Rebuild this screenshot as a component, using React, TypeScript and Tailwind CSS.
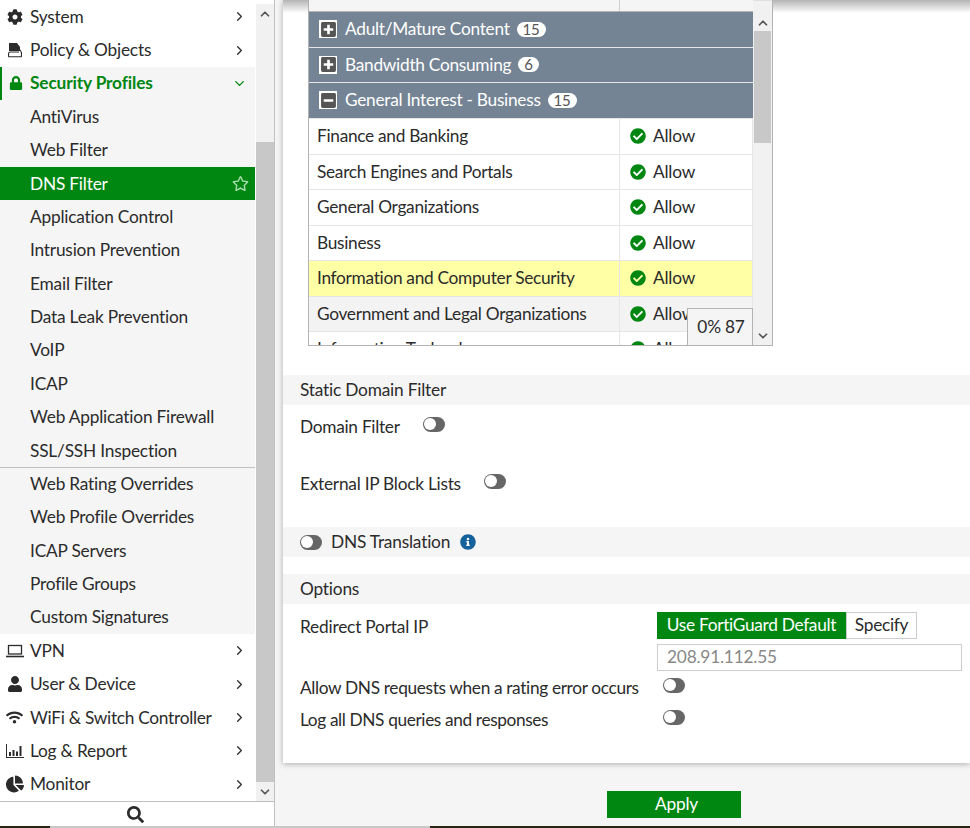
import {
  FaCog,
  FaLock,
  FaRegStar,
  FaUser,
  FaWifi,
  FaChartPie,
  FaSearch,
  FaPlusSquare,
  FaMinusSquare,
  FaCheckCircle,
  FaInfoCircle,
} from "react-icons/fa";
import { ChevronRight, ChevronDown, ChevronUp } from "lucide-react";
import type { ReactNode } from "react";

const PolicyIcon = () => (
  <svg viewBox="0 0 16 16" className="h-4 w-4" fill="#2b2b2b">
    <path d="M2 1h8l3 4v4H2z" />
    <path d="M13 7l2 3.5v4a.8.8 0 0 1-.8.8H1.8a.8.8 0 0 1-.8-.8V12c0-1.2.8-2.5 2.2-2.5H12v1H3.4c-.8 0-1.3.7-1.3 1.500v2.2h11.800v-3.400L13 9z" />
  </svg>
);

const LaptopIcon = () => (
  <svg viewBox="0 0 18 14" className="h-[14px] w-[18px]" fill="none" stroke="#2b2b2b">
    <rect x="2.500" y="1.500" width="13" height="8.500" strokeWidth="1.300" />
    <path d="M0 12.500h18" strokeWidth="1.600" />
  </svg>
);

const ChartIcon = () => (
  <svg viewBox="0 0 18 14" className="h-[14px] w-[18px]" fill="#2b2b2b">
    <path d="M0 0h1v13h17v1H0z" />
    <path d="M3 8h2v4H3zM6.500 6h2v6h-2zM10 7.500h2V12h-2zM13.500 2h2v10h-2z" />
  </svg>
);

const Toggle = () => (
  <span className="flex h-[15px] w-[22px] items-center rounded-full bg-[#666] pl-[1px]">
    <span className="h-[12px] w-[12px] rounded-full bg-white" />
  </span>
);

type MenuItem = { label: string; icon: ReactNode; tracking?: string };

const topItems: MenuItem[] = [
  { label: "System", icon: <FaCog size={16} color="#2b2b2b" /> },
  { label: "Policy & Objects", icon: <PolicyIcon /> },
];

const subItems = [
  "AntiVirus",
  "Web Filter",
  "DNS Filter",
  "Application Control",
  "Intrusion Prevention",
  "Email Filter",
  "Data Leak Prevention",
  "VoIP",
  "ICAP",
  "Web Application Firewall",
  "SSL/SSH Inspection",
];

const subItems2 = [
  "Web Rating Overrides",
  "Web Profile Overrides",
  "ICAP Servers",
  "Profile Groups",
  "Custom Signatures",
];

const bottomItems: MenuItem[] = [
  { label: "VPN", icon: <LaptopIcon /> },
  { label: "User & Device", icon: <FaUser size={16} color="#2b2b2b" /> },
  {
    label: "WiFi & Switch Controller",
    icon: <FaWifi size={17} color="#2b2b2b" />,
    tracking: "tracking-[-0.280px]",
  },
  { label: "Log & Report", icon: <ChartIcon /> },
  { label: "Monitor", icon: <FaChartPie size={18} color="#2b2b2b" /> },
];

const TopRow = ({ item }: { item: MenuItem }) => (
  <div className="flex h-[33.380px] items-center pr-[8px]">
    <span className="flex w-[30px] shrink-0 justify-center pr-[1px]">{item.icon}</span>
    <span className={`flex-1 ${item.tracking ?? ""}`}>{item.label}</span>
    <ChevronRight size={15} strokeWidth={2.200} color="#333" />
  </div>
);

const SubRow = ({ label }: { label: string }) => {
  if (label === "DNS Filter") {
    return (
      <div className="flex h-[33.380px] items-center bg-[#008712] pl-[30px] pr-[6px] text-white">
        <span className="flex-1">{label}</span>
        <FaRegStar size={17} color="#a5dcae" />
      </div>
    );
  }
  return <div className="flex h-[33.380px] items-center pl-[30px]">{label}</div>;
};

const Sidebar = () => (
  <aside className="flex h-[826px] w-[275px] shrink-0 flex-col border-r border-[#c0c0c0] bg-white">
    <div className="flex h-[801px]">
      <nav className="w-[255px] shrink-0">
        {topItems.map((item) => (
          <TopRow key={item.label} item={item} />
        ))}
        <div className="bg-[#f5f5f5]">
          <div className="flex h-[33.380px] items-center border-l-2 border-[#008712] pr-[8px] font-bold text-[#008712]">
            <span className="flex w-[28px] shrink-0 justify-center pr-[1px]">
              <FaLock size={14} />
            </span>
            <span className="flex-1 tracking-[-0.140px]">Security Profiles</span>
            <ChevronDown size={15} strokeWidth={2.200} />
          </div>
          {subItems.map((label) => (
            <SubRow key={label} label={label} />
          ))}
          <div className="shadow-[inset_0_1px_0_#c0c0c0]">
            {subItems2.map((label) => (
              <SubRow key={label} label={label} />
            ))}
          </div>
        </div>
        {bottomItems.map((item) => (
          <TopRow key={item.label} item={item} />
        ))}
      </nav>
      <div className="ml-[1px] mt-[4px] flex w-[18px] flex-col bg-[#f1f1f1]">
        <div className="flex h-[138px] justify-center pt-[3px] text-[#555]">
          <ChevronUp size={14} strokeWidth={3} />
        </div>
        <div className="flex-1 bg-[#c8c8c8]" />
        <div className="flex h-[19px] justify-center pt-[3px] text-[#555]">
          <ChevronDown size={14} strokeWidth={3} />
        </div>
      </div>
    </div>
    <div className="flex h-[25px] items-center justify-center border-t border-[#c0c0c0] pr-[4px]">
      <FaSearch size={17} color="#2b2b2b" />
    </div>
  </aside>
);

const groups = [
  { label: "Adult/Mature Content", count: 15, open: false },
  { label: "Bandwidth Consuming", count: 6, open: false },
  { label: "General Interest - Business", count: 15, open: true },
];

const rows = [
  { label: "Finance and Banking", bg: "bg-white" },
  { label: "Search Engines and Portals", bg: "bg-white" },
  { label: "General Organizations", bg: "bg-white" },
  { label: "Business", bg: "bg-white" },
  { label: "Information and Computer Security", bg: "bg-[#ffffa5]" },
  { label: "Government and Legal Organizations", bg: "bg-[#f3f3f3]" },
  { label: "Information Technology", bg: "bg-white" },
];

const CategoryTable = () => (
  <div className="relative ml-[25px] h-[346px] w-[465px] overflow-hidden border-x border-b border-[#b3b3b3]">
    <div className="flex">
      <div className="w-[444px] shrink-0">
        <div className="flex h-[12px] border-b border-[#b3b3b3] bg-[#f5f5f5]">
          <div className="w-[311px] border-r border-[#d0d0d0]" />
        </div>
        {groups.map((g) => (
          <div
            key={g.label}
            className="flex h-[35.500px] items-center border-b border-[#e6e6e6] bg-[#748494] pl-[10px] text-white"
          >
            <span className="mr-[8px] flex h-[18px] w-[18px] items-center justify-center bg-white">
              {g.open ? <FaMinusSquare size={17} color="#555" /> : <FaPlusSquare size={17} color="#555" />}
            </span>
            <span className="tracking-[-0.280px]">{g.label}</span>
            <span className="ml-[7px] rounded-full bg-white px-[6px] text-[15px] leading-[15px] text-[#555]">
              {g.count}
            </span>
          </div>
        ))}
        <div className="pt-[0.500px]">
          {rows.map((r) => (
            <div key={r.label} className={`flex h-[35.500px] border-b border-[#e6e6e6] ${r.bg}`}>
              <div className="flex w-[311px] shrink-0 items-center whitespace-nowrap border-r border-[#e6e6e6] pl-[8px] tracking-[-0.300px]">
                {r.label}
              </div>
              <div className="flex flex-1 items-center border-r border-[#e6e6e6] pl-[10px]">
                <FaCheckCircle size={16} color="#008712" />
                <span className="ml-[7px]">Allow</span>
              </div>
            </div>
          ))}
        </div>
      </div>
      <div className="flex h-[345px] w-[19px] shrink-0 flex-col bg-[#f1f1f1]">
        <div className="flex h-[31px] justify-center border-t border-[#e0e0e0] pt-[15px] text-[#555]">
          <ChevronUp size={14} strokeWidth={3} />
        </div>
        <div className="mx-[1px] h-[112px] bg-[#c8c8c8]" />
        <div className="flex-1" />
        <div className="flex h-[19px] justify-center pt-[3px] text-[#555]">
          <ChevronDown size={14} strokeWidth={3} />
        </div>
      </div>
    </div>
    <div className="absolute bottom-0 left-[378px] flex h-[37px] w-[66px] items-center justify-center border-x border-t border-[#b3b3b3] bg-[#f5f5f5] pl-[2px]">
      0% 87
    </div>
  </div>
);

const SectionBar = ({ children }: { children: ReactNode }) => (
  <div className="flex h-[30px] items-center bg-[#f5f5f5] pl-[17px]">{children}</div>
);

export default function App() {
  return (
    <div className="flex h-[828px] w-[970px] flex-col overflow-hidden bg-[#f5f5f5] text-[17.300px] tracking-[-0.2px] text-[#2b2b2b] font-['Lato',sans-serif]">
      <div className="flex h-[826px]">
        <Sidebar />
        <main className="flex min-w-0 flex-1 flex-col pl-[8px]">
          <div className="h-[763px] bg-[linear-gradient(#b4b4b4,#fff_13px)] shadow-[0_1px_6px_rgba(0,0,0,0.3)]">
            <CategoryTable />
            <div className="mt-[29px]">
              <SectionBar>Static Domain Filter</SectionBar>
            </div>
            <div className="h-[122px] pl-[17px]">
              <div className="flex h-[44px] items-center">
                <span className="tracking-[-0.280px]">Domain Filter</span>
                <span className="mb-[6px] ml-[23px]">
                  <Toggle />
                </span>
              </div>
              <div className="mt-[13px] flex h-[44px] items-center">
                <span className="tracking-[-0.250px]">External IP Block Lists</span>
                <span className="mb-[6px] ml-[23px]">
                  <Toggle />
                </span>
              </div>
            </div>
            <SectionBar>
              <Toggle />
              <span className="ml-[9px]">DNS Translation</span>
              <FaInfoCircle size={16} color="#15619b" className="ml-[10px]" />
            </SectionBar>
            <div className="mt-[17px]">
              <SectionBar>Options</SectionBar>
            </div>
            <div className="flex pl-[17px] pt-[8px]">
              <span className="w-[357px] pt-[2px]">Redirect Portal IP</span>
              <div>
                <div className="flex h-[27px] tracking-[-0.300px]">
                  <span className="flex w-[189px] items-center justify-center bg-[#008712] pb-[1px] text-white">
                    Use FortiGuard Default
                  </span>
                  <span className="flex w-[71px] items-center justify-center border border-[#ccc] pb-[1px]">
                    Specify
                  </span>
                </div>
                <div className="mt-[5px] flex h-[27px] w-[305px] items-center border border-[#ccc] pb-[1px] pl-[9px] text-[#888]">
                  208.91.112.55
                </div>
              </div>
            </div>
            <div className="mt-[1px] flex h-[32px] items-center pl-[17px]">
              <span className="w-[363px] tracking-[-0.350px]">Allow DNS requests when a rating error occurs</span>
              <span className="mb-[6px]">
                <Toggle />
              </span>
            </div>
            <div className="flex h-[32px] items-center pl-[17px]">
              <span className="w-[363px] tracking-[-0.380px]">Log all DNS queries and responses</span>
              <span className="mb-[6px]">
                <Toggle />
              </span>
            </div>
          </div>
          <div className="pl-[324px] pt-[28px]">
            <button className="h-[27px] w-[134px] bg-[#008712] pb-[1px] pl-[5px] text-white">Apply</button>
          </div>
        </main>
      </div>
      <div className="flex h-[2px]">
        <div className="w-[50px] bg-[#2a2415]" />
        <div className="w-[380px] bg-[#c8c8c8]" />
        <div className="flex-1 bg-[#2a2415]" />
      </div>
    </div>
  );
}
